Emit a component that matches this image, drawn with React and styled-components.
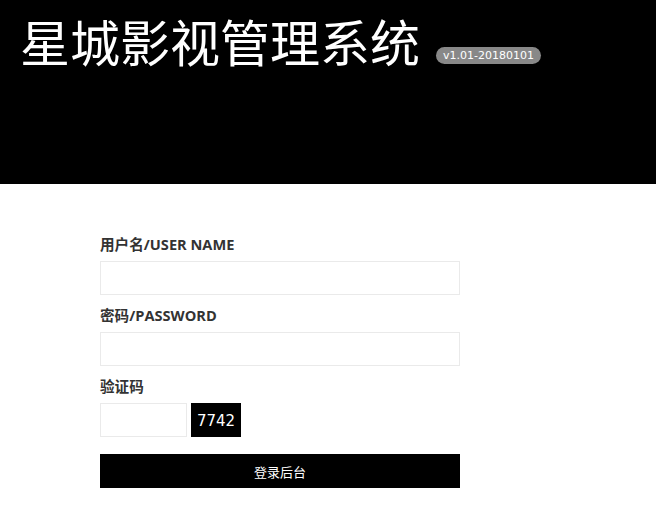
import React from "react";
import styled, { createGlobalStyle } from "styled-components";

const Global = createGlobalStyle`
  html, body { margin: 0; padding: 0; background: #fff; }
  body { font-family: "Open Sans", "Noto Sans CJK SC", sans-serif; }
  * { box-sizing: border-box; }
`;

const Header = styled.header`
  height: 184px;
  background: #000;
  display: flex;
  align-items: flex-start;
  padding: 12px 0 0 20px;
`;

const TitleRow = styled.div`
  display: flex;
  align-items: flex-end;
`;

const Title = styled.h1`
  margin: 0;
  font-family: "Noto Sans CJK SC", sans-serif;
  font-weight: 400;
  font-size: 50px;
  line-height: 56px;
  color: #fff;
  letter-spacing: 0;
`;

const Badge = styled.span`
  margin: 0 0 4px 16px;
  background: #888;
  color: #fff;
  font-family: "DejaVu Sans", sans-serif;
  font-size: 11px;
  line-height: 17px;
  height: 17px;
  padding: 0 7px;
  border-radius: 9px;
`;

const Form = styled.form`
  width: 360px;
  margin: 50px 0 0 100px;
  display: flex;
  flex-direction: column;
`;

const Group = styled.div`
  display: flex;
  flex-direction: column;
  margin-bottom: ${(p) => p.$mb || 10}px;
`;

const Label = styled.label`
  font-size: 14.6px;
  font-weight: 700;
  line-height: 20px;
  color: #333;
  margin-bottom: ${(p) => p.$mb || 7}px;
`;

const Input = styled.input`
  width: ${(p) => p.$w || "100%"};
  height: 34px;
  border: 1px solid #eaeaea;
  outline: none;
  padding: 0 8px;
  font-size: 14px;
  background: #fff;
`;

const CaptchaRow = styled.div`
  display: flex;
  gap: 4px;
`;

const Captcha = styled.div`
  width: 50px;
  height: 34px;
  background: #000;
  color: #fff;
  display: flex;
  align-items: center;
  justify-content: center;
  font-family: "DejaVu Sans", sans-serif;
  font-size: 15px;
  padding-top: 2px;
`;

const Button = styled.button`
  margin-top: 7px;
  height: 34px;
  width: 100%;
  border: none;
  background: #000;
  color: #fff;
  font-family: "Noto Sans CJK SC", sans-serif;
  font-size: 13px;
  cursor: pointer;
`;

export default function App() {
  return (
    <>
      <Global />
      <Header>
        <TitleRow>
          <Title>星城影视管理系统</Title>
          <Badge>v1.01-20180101</Badge>
        </TitleRow>
      </Header>
      <Form onSubmit={(e) => e.preventDefault()}>
        <Group>
          <Label>用户名/USER NAME</Label>
          <Input type="text" />
        </Group>
        <Group>
          <Label>密码/PASSWORD</Label>
          <Input type="password" />
        </Group>
        <Group>
          <Label>验证码</Label>
          <CaptchaRow>
            <Input $w="87px" type="text" />
            <Captcha>7742</Captcha>
          </CaptchaRow>
        </Group>
        <Button type="submit">登录后台</Button>
      </Form>
    </>
  );
}
